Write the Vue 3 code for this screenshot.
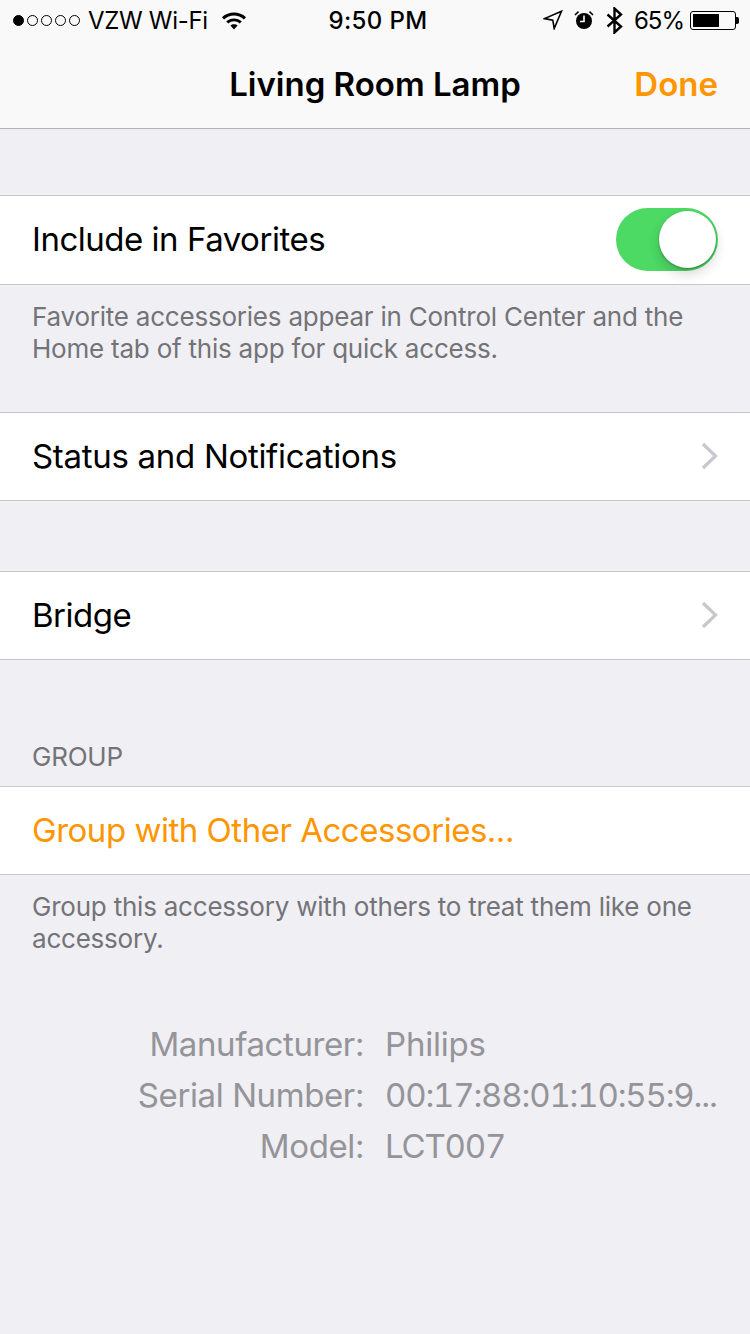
<script setup>
const info = [
  { label: 'Manufacturer:', value: 'Philips', tight: false },
  { label: 'Serial Number:', value: '00:17:88:01:10:55:9...', tight: true },
  { label: 'Model:', value: 'LCT007', tight: true }
]
</script>

<template>
  <main class="page">
    <header class="top">
      <div class="status">
        <div class="status-left">
          <span class="dots">
            <i class="dot on"></i><i class="dot"></i><i class="dot"></i><i class="dot"></i><i class="dot"></i>
          </span>
          <span class="carrier">VZW Wi-Fi</span>
          <svg class="wifi" width="26" height="20" viewBox="0 0 26 20">
            <path d="M1 7.2C7.6 1 18.4 1 25 7.2L22.9 9.4C17.4 4.3 8.6 4.3 3.1 9.4Z" fill="#000" />
            <path d="M5.2 11.4C9.5 7.4 16.5 7.4 20.8 11.4L18.7 13.5C15.4 10.5 10.6 10.5 7.3 13.5Z" fill="#000" />
            <path d="M9.4 15.6C11.4 13.8 14.6 13.8 16.6 15.6L13 19.4Z" fill="#000" />
          </svg>
        </div>
        <span class="clock">9:50 PM</span>
        <div class="status-right">
          <svg class="arrow" width="20" height="20" viewBox="0 0 20 20">
            <path d="M18.5 1.2L1.5 8.6L9.8 10.2L11.2 18.5Z" fill="none" stroke="#000" stroke-width="1.6" />
          </svg>
          <svg class="alarm" width="20" height="20" viewBox="0 0 20 20">
            <circle cx="10" cy="11" r="8" fill="#000" />
            <path d="M10 5.5V11.5H6" fill="none" stroke="#fff" stroke-width="1.6" />
            <path d="M1 5L4.5 1.6M19 5L15.5 1.6" stroke="#000" stroke-width="1.6" />
          </svg>
          <svg class="bt" width="17" height="27" viewBox="0 0 17 27">
            <path d="M1.5 7.5L15 19.5L8.5 25.5V1.5L15 7.5L1.5 19.5" fill="none" stroke="#000" stroke-width="2.4" />
          </svg>
          <span class="percent">65%</span>
          <div class="battery">
            <div class="battery-body"><div class="battery-fill"></div></div>
            <div class="battery-tip"></div>
          </div>
        </div>
      </div>
      <nav class="nav">
        <span class="nav-title">Living Room Lamp</span>
        <span class="nav-done">Done</span>
      </nav>
    </header>

    <section class="row first">
      <span>Include in Favorites</span>
      <div class="switch"><div class="knob"></div></div>
    </section>
    <p class="note">Favorite accessories appear in Control Center and the Home tab of this app for quick access.</p>

    <section class="row status-row">
      <span>Status and Notifications</span>
      <svg class="chevron" width="17" height="28" viewBox="0 0 17 28">
        <path d="M2 2L14.5 14L2 26" fill="none" stroke="#c7c7cc" stroke-width="3.2" />
      </svg>
    </section>

    <section class="row bridge-row">
      <span>Bridge</span>
      <svg class="chevron" width="17" height="28" viewBox="0 0 17 28">
        <path d="M2 2L14.5 14L2 26" fill="none" stroke="#c7c7cc" stroke-width="3.2" />
      </svg>
    </section>

    <h2 class="group-label">GROUP</h2>
    <section class="row action">
      <span>Group with Other Accessories...</span>
    </section>
    <p class="note">Group this accessory with others to treat them like one accessory.</p>

    <dl class="info">
      <template v-for="item in info" :key="item.label">
        <dt>{{ item.label }}</dt>
        <dd :class="{ tight: item.tight }">{{ item.value }}</dd>
      </template>
    </dl>
  </main>
</template>

<style>
html,
body {
  margin: 0;
  background: #efeff4;
}
</style>

<style scoped>
.page {
  width: 750px;
  height: 1334px;
  overflow: hidden;
  background: #efeff4;
  font-family: Inter, "Liberation Sans", sans-serif;
  color: #000;
}

.top {
  height: 129px;
  box-sizing: border-box;
  background: #f9f9f9;
  border-bottom: 1px solid #b2b2b6;
}

.status {
  height: 40px;
  display: grid;
  grid-template-columns: 1fr auto 1fr;
  align-items: center;
  padding: 0 11px 0 13px;
  font-size: 24px;
}

.status-left {
  display: flex;
  align-items: center;
}

.dots {
  display: flex;
  gap: 3px;
}

.dot {
  width: 11px;
  height: 11px;
  box-sizing: border-box;
  border: 1px solid #000;
  border-radius: 50%;
}

.dot.on {
  background: #000;
}

.carrier {
  margin-left: 8px;
  letter-spacing: -0.3px;
}

.wifi {
  margin-left: 13px;
}

.clock {
  margin-left: 4px;
  font-weight: 500;
  letter-spacing: 0.4px;
}

.status-right {
  display: flex;
  align-items: center;
  justify-content: flex-end;
}

.alarm {
  margin-left: 11px;
}

.bt {
  margin-left: 12px;
}

.percent {
  margin-left: 11px;
  letter-spacing: -1px;
}

.battery {
  display: flex;
  align-items: center;
  margin-left: 6px;
}

.battery-body {
  width: 46px;
  height: 19px;
  box-sizing: border-box;
  border: 1px solid #000;
  border-radius: 3px;
  padding: 2px;
}

.battery-fill {
  width: 26px;
  height: 100%;
  background: #000;
}

.battery-tip {
  width: 3px;
  height: 7px;
  background: #000;
  border-radius: 0 2px 2px 0;
}

.nav {
  height: 88px;
  position: relative;
  display: flex;
  align-items: center;
  justify-content: center;
}

.nav-title {
  font-size: 33px;
  font-weight: 600;
}

.nav-done {
  position: absolute;
  right: 32px;
  font-size: 33px;
  font-weight: 600;
  color: #ff9500;
}

.row {
  height: 89px;
  box-sizing: border-box;
  display: flex;
  align-items: center;
  justify-content: space-between;
  padding: 0 32px 1px 32px;
  background: #fff;
  border-top: 1px solid #c8c7cc;
  border-bottom: 1px solid #c8c7cc;
  font-size: 33px;
  letter-spacing: -0.48px;
}

.first {
  height: 90px;
  margin-top: 66px;
  padding-bottom: 2px;
}

.status-row {
  letter-spacing: -0.3px;
}

.switch {
  width: 102px;
  height: 63px;
  box-sizing: border-box;
  display: flex;
  justify-content: flex-end;
  align-items: center;
  padding-right: 2px;
  background: #4cd964;
  border-radius: 32px;
}

.knob {
  width: 57px;
  height: 57px;
  background: #fff;
  border-radius: 50%;
  box-shadow: 0 6px 12px rgba(0, 0, 0, 0.16), 0 1px 2px rgba(0, 0, 0, 0.3);
}

.bridge-row {
  margin-top: 70px;
}

.note {
  margin: 0;
  padding: 16px 32px 47px 32px;
  font-size: 26px;
  line-height: 32px;
  letter-spacing: -0.22px;
  color: #737378;
}

.group-label {
  margin: 81px 0 0;
  padding: 0 32px;
  height: 45px;
  font-size: 26px;
  font-weight: 400;
  letter-spacing: -0.24px;
  color: #737378;
}

.action {
  color: #ff9500;
}

.info {
  margin: 22px 0 0;
  display: grid;
  grid-template-columns: 364px 1fr;
  column-gap: 21px;
  row-gap: 10px;
  font-size: 33px;
  line-height: 41px;
  letter-spacing: -0.4px;
  color: #949499;
}

.info dt {
  text-align: right;
}

.info dd {
  margin: 0;
  letter-spacing: -0.2px;
}

.info dd.tight {
  font-variant-numeric: tabular-nums;
  letter-spacing: -1.2px;
}
</style>
